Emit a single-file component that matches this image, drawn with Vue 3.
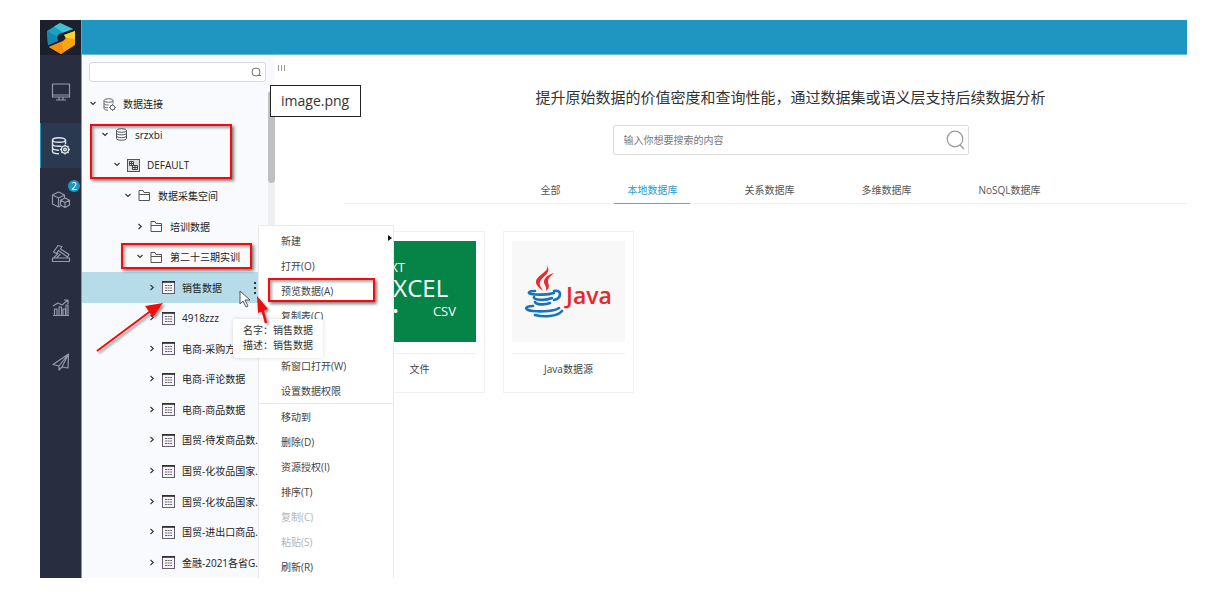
<script setup>
import { ref } from 'vue'

const nav = ['screen', 'data', 'cubes', 'hammer', 'chart', 'plane']
const tree = [
  { label: '数据连接', level: 0, icon: 'dbgear', open: true },
  { label: 'srzxbi', level: 1, icon: 'db', open: true },
  { label: 'DEFAULT', level: 2, icon: 'schema', open: true },
  { label: '数据采集空间', level: 3, icon: 'folder', open: true },
  { label: '培训数据', level: 4, icon: 'folder' },
  { label: '第二十三期实训', level: 4, icon: 'folder', open: true },
  { label: '销售数据', level: 5, icon: 'table', active: true },
  { label: '4918zzz', level: 5, icon: 'table' },
  { label: '电商-采购方案数...', level: 5, icon: 'table' },
  { label: '电商-评论数据', level: 5, icon: 'table' },
  { label: '电商-商品数据', level: 5, icon: 'table' },
  { label: '国贸-待发商品数...', level: 5, icon: 'table' },
  { label: '国贸-化妆品国家...', level: 5, icon: 'table' },
  { label: '国贸-化妆品国家...', level: 5, icon: 'table' },
  { label: '国贸-进出口商品...', level: 5, icon: 'table' },
  { label: '金融-2021各省G...', level: 5, icon: 'table' },
]
const menu = [
  { label: '新建', sub: true },
  { label: '打开(O)' },
  { label: '预览数据(A)' },
  { label: '复制表(C)' },
  { label: '编辑(V)' },
  { label: '新窗口打开(W)' },
  { label: '设置数据权限', end: true },
  { label: '移动到' },
  { label: '删除(D)' },
  { label: '资源授权(I)' },
  { label: '排序(T)' },
  { label: '复制(C)', off: true },
  { label: '粘贴(S)', off: true },
  { label: '刷新(R)' },
]
const tabs = ['全部', '本地数据库', '关系数据库', '多维数据库', 'NoSQL数据库']
const current = ref(1)
</script>

<template>
  <div class="page">
    <div class="app">
      <nav class="rail">
        <div class="logo">
          <svg width="30" height="32" viewBox="0 0 30 32">
            <path d="M14 1 27 7 13 12 11 15 12 19 2 23 1 9z" fill="#16a2c4" />
            <path d="M14 1 27 7 17 10.500 8 4.500z" fill="#43c3d0" />
            <path d="M1 9 10 14 12 19 2 23z" fill="#1287b0" />
            <path d="M29 9v14l-14 9-12-7 14-6 3-3-2-3z" fill="#f9a50d" />
            <path d="M29 9v8l-9-1-2-3z" fill="#ffcf2e" />
            <path d="M3 25 15 20l3 10-3 2z" fill="#f58f10" />
          </svg>
        </div>
        <div class="nav-list">
          <button v-for="n in nav" :key="n" type="button" class="nav" :class="{ on: n === 'data' }" :aria-label="n">
            <svg width="20" height="20" viewBox="0 0 20 20" fill="none" stroke="currentColor" stroke-width="1.2" stroke-linejoin="round">
              <g v-if="n === 'screen'">
                <rect x="1.500" y="2" width="17" height="13" /><path d="M2 13h16M5 18h3.500M11.500 18H15M8 15v3h4v-3" />
              </g>
              <g v-else-if="n === 'data'" stroke-width="1.400">
                <ellipse cx="8" cy="4" rx="6.500" ry="2.300" />
                <path d="M1.500 4v11.500c0 1.300 3 2.200 6.500 2.300M14.500 4v4M1.500 8c0 1.500 3 2.300 6.500 2.300h2M1.500 12c0 1.300 3 2 6.500 2.200" />
                <circle cx="14" cy="13.500" r="3.600" /><circle cx="14" cy="13.500" r="1.300" />
                <path d="M14 8.500v1.500M14 17v1.500M9 13.500h1.500M17.500 13.500H19M10.500 10l1 1M16.500 16l1 1M17.500 10l-1 1M11.500 16l-1 1" />
              </g>
              <g v-else-if="n === 'cubes'">
                <path d="M7.500 2 13.500 5v3M7.500 2 1.500 5v9l6 3 2-1M1.500 5l6 3 6-3M7.500 8v9M14 8l-4.500 2.200V15l4.500 2.500 4.500-2.500v-4.800zM9.500 10.200 14 12.500l4.500-2.300M14 12.500v5" />
              </g>
              <g v-else-if="n === 'hammer'">
                <path d="M1.500 17.500h17v-3.500h-17zM2.500 14l5-5M5.500 14l4-4M7 1.500 2.500 8l3 1.500 2-3L16.500 13l1.500-2.500L9.500 5l1.500-2.500z" />
              </g>
              <g v-else-if="n === 'chart'">
                <path d="M2 17.500h16M3.500 17v-6H6v6M8 17V9h2.500v8M12 17v-6h2.500v6M15 17V7h2v10M2 8l5-3 4 2 6-5M13 2h4v4" />
              </g>
              <g v-else>
                <path d="M17.500 2 2 12.500l6 1.500zM17.500 2 8 14v4l3-3 6 1zM11 15l6.500-13" />
              </g>
            </svg>
            <span v-if="n === 'cubes'" class="badge">2</span>
          </button>
        </div>
      </nav>

      <div class="body">
        <header class="top"></header>
        <div class="content">
          <aside class="side">
            <label class="find">
              <input type="text" aria-label="搜索" />
              <svg width="11" height="11" viewBox="0 0 11 11" fill="none" stroke="#777"><circle cx="5" cy="5" r="4" /><path d="M7 8.500h3" /></svg>
            </label>
            <div class="tree" role="tree">
              <div v-for="(r, i) in tree" :key="i" class="row" :class="['l' + r.level, { active: r.active }]" role="treeitem">
                <svg class="chev" width="6" height="8" viewBox="0 0 6 8" fill="none" stroke="#333" stroke-width="1.1">
                  <path :d="r.open ? 'M.5 2 3 4.500 5.500 2' : 'M1.500 1 4.300 3.500 1.500 6'" />
                </svg>
                <svg width="13" height="13" viewBox="0 0 13 13" fill="none" stroke="#555">
                  <g v-if="r.icon === 'dbgear'" stroke="#666">
                    <ellipse cx="5.500" cy="2.500" rx="4.500" ry="1.800" /><path d="M1 2.500v8c0 1 2 1.700 4 1.800M10 2.500v3M1 5.500c0 1 2 1.500 4.500 1.500M1 8.500c0 .7 1.500 1.300 4 1.300" />
                    <circle cx="9.500" cy="9.500" r="2.300" /><path d="M9.500 6v1M9.500 12v1M6 9.500h1M12 9.500h1M7.200 7.200l.6.600M11.200 11.200l.6.600" />
                  </g>
                  <g v-else-if="r.icon === 'db'">
                    <ellipse cx="6.500" cy="2.500" rx="5" ry="1.800" /><path d="M1.500 2.500v8c0 2.300 10 2.300 10 0v-8M1.500 5.200c0 2.200 10 2.200 10 0M1.500 8c0 2.200 10 2.200 10 0" />
                  </g>
                  <g v-else-if="r.icon === 'schema'">
                    <rect x=".5" y=".5" width="12" height="12" fill="#ddd" /><path d="M2.500 2.500h4v4h-4zM2.500 4.500h4M4.500 2.500v4M5.500 6.500h5v4h-5zM5.500 8.500h5M8 6.500v4" stroke="#444" />
                  </g>
                  <g v-else-if="r.icon === 'folder'">
                    <path d="M1 11.500v-10h4l1 2h5.500v8zM1 5.500h10.500" />
                  </g>
                  <g v-else>
                    <rect x=".5" y=".5" width="12" height="12" fill="#f6f4fa" stroke="#665d70" /><path d="M0 1h13" stroke="#222" stroke-width="1.500" /><path d="M3 4.500h7M3 7h7M3 9.500h7" stroke="#666" stroke-dasharray="2 .6" />
                  </g>
                </svg>
                <span>{{ r.label }}</span>
              </div>
            </div>
            <div class="track"><div class="thumb"></div></div>
          </aside>

          <main class="main">
            <button type="button" class="grip" aria-label="收起"><i></i><i></i><i></i></button>
            <div class="hero">
              <h1>提升原始数据的价值密度和查询性能，通过数据集或语义层支持后续数据分析</h1>
              <label class="search">
                <input type="text" placeholder="输入你想要搜索的内容" aria-label="搜索数据源" />
                <svg width="20" height="20" viewBox="0 0 20 20" fill="none" stroke="#999" stroke-width="1.200"><circle cx="10" cy="9" r="7.800" /><path d="M15 15 19 19" /></svg>
              </label>
            </div>
            <div class="tabs">
              <button v-for="(t, i) in tabs" :key="t" type="button" :class="{ on: current === i }" @click="current = i">{{ t }}</button>
            </div>
            <div class="cards">
              <article class="card">
                <div class="pic green">
                  <span class="txt">TXT</span>
                  <span class="excel">EXCEL</span>
                  <span class="csv"><b>•</b>CSV</span>
                </div>
                <p>文件</p>
              </article>
              <article class="card">
                <div class="pic java">
                  <svg width="39" height="53" viewBox="0 0 39 53">
                    <path d="M22 0C25 7 11 10 11 17c0 4 4 6 7 9-2-4-4-6-3-9C17 11 27 9 22 0zM29 8c-7 2-10 5-10 9 0 3 3 4 2 9 5-4 2-7 2-10 0-3 3-5 6-8z" fill="#ea2a2d" />
                    <g fill="none" stroke="#1873ba" stroke-width="2.600" stroke-linecap="round">
                      <path d="M10 26c-6 0-8 2-4 3 6 1 17 1 23-1M9 32c-1 3 11 4 18 1M10 37c1 3 10 3 15 1M29 26c8-2 8 7 0 9" />
                      <path d="M8 41c-9 0-9 4 0 5 10 1 22 0 26-3M10 50c8 2 22 2 27-4" />
                    </g>
                  </svg>
                  <span>Java</span>
                </div>
                <p>Java数据源</p>
              </article>
            </div>
          </main>
        </div>
      </div>

      <div class="menu" role="menu">
        <button v-for="m in menu" :key="m.label" type="button" role="menuitem" :class="{ end: m.end }" :disabled="m.off">
          {{ m.label }}<i v-if="m.sub" class="arrow"></i>
        </button>
      </div>
      <span class="dots"><i></i><i></i><i></i></span>
      <div class="tip">名字：销售数据<br />描述：销售数据</div>
      <div class="mark m1"></div>
      <div class="mark m2"></div>
      <div class="mark m3"></div>
      <svg class="arrows" width="240" height="120" viewBox="0 0 240 120">
        <g class="shade" fill="#f00d0d" stroke="#f00d0d">
          <path d="M17 83 72 42" stroke-width="2" /><path d="M83 35 65 38 73 49z" stroke="none" />
          <path d="M186 55 182 40" stroke-width="2.500" /><path d="M177 28 178 45 188 41z" stroke="none" />
        </g>
        <path d="M160 23v13l3-3 3 6 2-1-3-6h5z" fill="#fff" stroke="#555" />
      </svg>
      <div class="file-name">image.png</div>
    </div>
  </div>
</template>

<style>
body {
  margin: 0;
  background: #fff;
}
</style>

<style scoped>
.page {
  box-sizing: border-box;
  min-height: 100vh;
  padding: 20px 30px 19px 40px;
  display: flex;
  font: 10px/14px "Open Sans", "Noto Sans CJK SC", sans-serif;
  color: #333;
}
* {
  box-sizing: border-box;
}
button,
input {
  font: inherit;
  color: inherit;
  border: 0;
  padding: 0;
  background: none;
  outline: 0;
}
.app {
  position: relative;
  flex: 1;
  display: flex;
  overflow: hidden;
}
.rail {
  width: 42px;
  flex: none;
  background: #282e40;
  border-right: 1px solid #8c93a3;
}
.logo {
  height: 35px;
  background: #1c202d;
  display: grid;
  place-items: center;
}
.nav-list {
  display: grid;
  gap: 9px;
  padding-top: 14px;
}
.nav {
  position: relative;
  height: 45px;
  display: grid;
  place-items: center;
  color: #929bab;
}
.nav.on {
  background: #2a3950;
  color: #e0e5ec;
  border-left: 1px solid #1f96c2;
}
.badge {
  position: absolute;
  top: 3px;
  right: 1px;
  width: 12px;
  height: 12px;
  border-radius: 6px;
  background: #1f96c2;
  color: #fff;
  line-height: 12px;
}
.body {
  flex: 1;
  display: flex;
  flex-direction: column;
  min-width: 0;
}
.top {
  height: 35px;
  background: #1f95c1;
  border-bottom: 1px solid #6db9d6;
}
.content {
  flex: 1;
  display: flex;
}
.side {
  position: relative;
  width: 193px;
  flex: none;
  display: flex;
  flex-direction: column;
  background: #f8fafd;
}
.find {
  margin: 7px 9px 7px 7px;
  height: 20px;
  border: 1px solid #d6d9de;
  border-radius: 3px;
  background: #fff;
  display: flex;
  align-items: center;
  padding: 0 3px;
}
.find input {
  flex: 1;
  min-width: 0;
}
.tree {
  flex: 1;
  display: grid;
  grid-auto-rows: 1fr;
}
.row {
  display: flex;
  align-items: center;
  gap: 7px;
  white-space: nowrap;
  overflow: hidden;
  color: #222;
}
.row svg {
  flex: none;
}
.l0 { padding-left: 8px; }
.l1 { padding-left: 20px; }
.l2 { padding-left: 32px; }
.l3 { padding-left: 43px; }
.l4 { padding-left: 55px; }
.l5 { padding-left: 67px; }
.active {
  background: #b7dce9;
}
.track {
  position: absolute;
  top: 36px;
  right: 0;
  bottom: 0;
  width: 7px;
  background: #eeeff1;
}
.thumb {
  height: 92px;
  border-radius: 4px;
  background: #bfc0c2;
}
.main {
  position: relative;
  flex: 1;
  padding-left: 69px;
  min-width: 0;
}
.grip {
  position: absolute;
  left: 3px;
  top: 10px;
  display: flex;
  gap: 2px;
}
.grip i {
  width: 1px;
  height: 6px;
  background: #a09a9a;
}
.hero {
  padding: 30px 0 22px 50px;
  display: flex;
  flex-direction: column;
  align-items: center;
}
h1 {
  margin: 0 0 16px;
  font-size: 15px;
  line-height: 24px;
  font-weight: 400;
  white-space: nowrap;
}
.search {
  width: 356px;
  height: 30px;
  border: 1px solid #dcdcdc;
  border-radius: 2px;
  display: flex;
  align-items: center;
  padding: 0 3px 0 10px;
}
.search input {
  flex: 1;
}
.search input::placeholder {
  color: #777;
  opacity: 1;
}
.tabs {
  display: flex;
  justify-content: center;
  gap: 41px;
  padding-left: 50px;
  border-bottom: 1px solid #f0f0f0;
}
.tabs button {
  height: 27px;
  padding: 0 13px;
  margin-bottom: -1px;
  color: #555;
  border-bottom: 1px solid transparent;
}
.tabs .on {
  color: #2a9ac6;
  border-color: #4fb0d2;
}
.cards {
  display: flex;
  gap: 18px;
  padding: 27px 10px;
}
.card {
  width: 131px;
  height: 162px;
  padding: 9px 8px;
  border: 1px solid #f1f1f1;
}
.pic {
  height: 101px;
}
.card p {
  margin: 11px 0 0;
  padding-top: 8px;
  border-top: 1px solid #f0f0f0;
  text-align: center;
  color: #444;
}
.green {
  background: #068448;
  color: #fff;
  display: flex;
  flex-direction: column;
  padding-top: 17px;
}
.txt {
  padding-left: 20px;
  font-size: 13px;
  line-height: 18px;
}
.excel {
  padding-left: 17px;
  font-size: 24px;
  line-height: 24px;
}
.csv {
  display: flex;
  justify-content: space-between;
  padding: 0 20px 0 30px;
  font-size: 13px;
  line-height: 22px;
}
.java {
  background: #f8f8f8;
  display: flex;
  align-items: center;
  gap: 2px;
  padding-left: 13px;
}
.java span {
  font-size: 23px;
  font-weight: 600;
  line-height: 30px;
  padding-top: 6px;
  color: #e8262a;
}
.menu {
  position: absolute;
  left: 218px;
  top: 205px;
  bottom: 0;
  width: 136px;
  padding-top: 2px;
  border: 1px solid #e9eaec;
  border-bottom: 0;
  background: #fff;
  overflow: hidden;
}
.menu button {
  display: flex;
  justify-content: space-between;
  align-items: center;
  width: 100%;
  height: 25px;
  padding: 0 1px 0 22px;
  color: #444;
}
.menu button.end {
  height: 26px;
  border-bottom: 1px solid #e8e8e8;
}
.menu button:disabled {
  color: #b4b4b4;
}
.arrow {
  border: 3px solid transparent;
  border-left: 4px solid #111;
  border-right: 0;
  margin-bottom: 6px;
}
.dots {
  position: absolute;
  left: 214px;
  top: 262px;
  display: grid;
  gap: 3px;
}
.dots i {
  width: 2px;
  height: 2px;
  background: #333;
}
.tip {
  position: absolute;
  left: 193px;
  top: 299px;
  padding: 4px 10px 5px;
  line-height: 15px;
  background: rgba(255, 255, 255, 0.96);
  border-radius: 3px;
  box-shadow: 0 0 4px rgba(0, 0, 0, 0.15);
  white-space: nowrap;
}
.mark {
  position: absolute;
  border: 2px solid #f00d0d;
  box-shadow: 2px 2px 3px rgba(0, 0, 0, 0.5), inset 2px 2px 3px rgba(0, 0, 0, 0.35);
}
.m1 {
  left: 50px;
  top: 104px;
  width: 142px;
  height: 55px;
}
.m2 {
  left: 81px;
  top: 223px;
  width: 131px;
  height: 26px;
}
.m3 {
  left: 228px;
  top: 258px;
  width: 107px;
  height: 24px;
}
.arrows {
  position: absolute;
  left: 40px;
  top: 248px;
}
.shade {
  filter: drop-shadow(2px 2px 1px rgba(0, 0, 0, 0.4));
}
.file-name {
  position: absolute;
  left: 230px;
  top: 65px;
  padding: 5px 11px 5px 10px;
  border: 1px solid #222;
  background: #fff;
  font-size: 14px;
  line-height: 20px;
}
</style>
